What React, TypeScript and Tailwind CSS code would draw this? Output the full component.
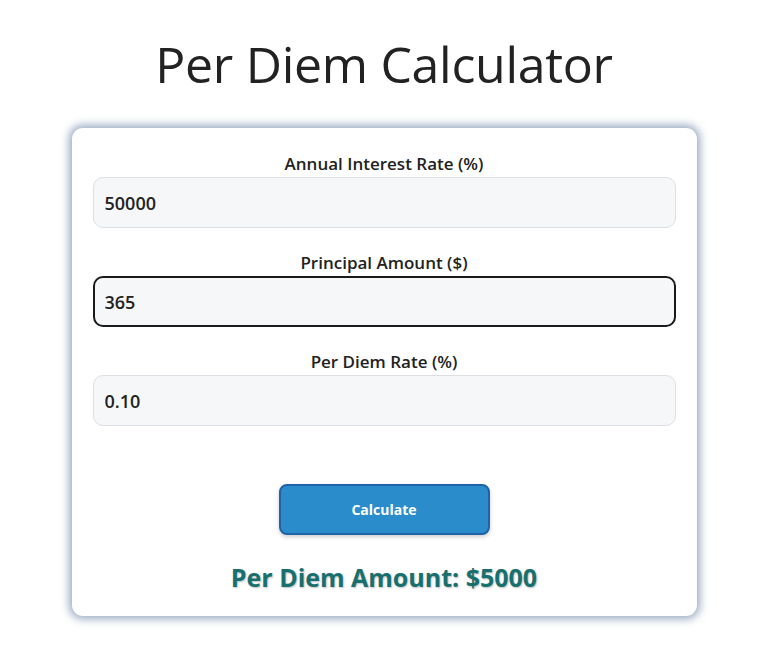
import React from "react";

const Field = ({
  label,
  value,
  focused,
}: {
  label: string;
  value: string;
  focused?: boolean;
}) => {
  return (
    <div className="flex flex-col">
      <label className="text-center text-[17px] font-semibold text-[#222] leading-[22px] mb-[2px]">
        {label}
      </label>
      <input
        type="text"
        defaultValue={value}
        className={
          focused
            ? "h-[51px] w-full rounded-[10px] border-2 border-[#1a1a1a] bg-[#f6f7f9] px-[10px] text-[18px] font-semibold text-[#222] outline-none"
            : "h-[51px] w-full rounded-[10px] border border-[#dcdfe3] bg-[#f6f7f9] px-[11px] text-[18px] font-semibold text-[#222] outline-none"
        }
      />
    </div>
  );
};

export default function App() {
  return (
    <div
      className="min-h-screen bg-white pt-[28px]"
      style={{ fontFamily: '"Open Sans", "Noto Sans", sans-serif' }}
    >
      <h1 className="text-center text-[50px] font-normal text-[#222] leading-[72px] tracking-[-0.3px]">
        Per Diem Calculator
      </h1>
      <div className="mx-auto mt-[28px] w-[625px] rounded-[11px] bg-white px-[21px] pt-[25px] pb-[22px] shadow-[0_0_9px_3px_rgba(85,115,155,0.6)]">
        <div className="flex flex-col gap-[24px]">
          <Field label="Annual Interest Rate (%)" value="50000" />
          <Field label="Principal Amount ($)" value="365" focused />
          <Field label="Per Diem Rate (%)" value="0.10" />
        </div>
        <div className="mt-[58px] flex justify-center">
          <button className="h-[51px] w-[211px] rounded-[8px] border-2 border-[#1f62a8] bg-[#2b8ccc] text-[14px] font-bold text-white shadow-[0_2px_4px_rgba(0,0,0,0.2)]">
            Calculate
          </button>
        </div>
        <p className="mt-[25px] text-center text-[25px] leading-[34px] font-bold text-[#17706e] [text-shadow:1px_1px_2px_rgba(0,0,0,0.25)]">
          Per Diem Amount: $5000
        </p>
      </div>
    </div>
  );
}
